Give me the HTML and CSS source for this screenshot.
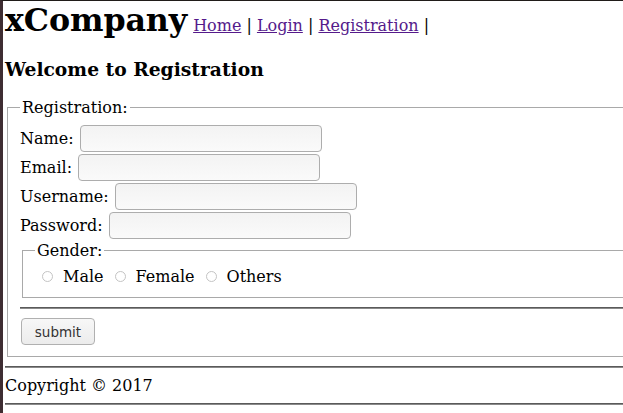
FILE: index.html
```html
<!DOCTYPE html>
<html>
<head>
<meta charset="utf-8">
<link rel="stylesheet" href="styles.css">
</head>
<body>
<div class="page">
  <header class="top">
    <h1 class="brand">xCompany</h1>
    <nav class="nav"><a href="#">Home</a> | <a href="#">Login</a> | <a href="#">Registration</a> |</nav>
  </header>
  <h3 class="welcome">Welcome to Registration</h3>
  <form class="form">
    <fieldset class="box">
      <legend class="legend">Registration:</legend>
      <div class="row"><label>Name:</label><input class="field" type="text"></div>
      <div class="row"><label>Email:</label><input class="field" type="text"></div>
      <div class="row"><label>Username:</label><input class="field" type="text"></div>
      <div class="row"><label>Password:</label><input class="field" type="password"></div>
      <fieldset class="box gender">
        <legend class="legend">Gender:</legend>
        <div class="radios">
          <span class="opt"><input class="radio" type="radio" name="g"><span>Male</span></span>
          <span class="opt"><input class="radio" type="radio" name="g"><span>Female</span></span>
          <span class="opt"><input class="radio" type="radio" name="g"><span>Others</span></span>
        </div>
      </fieldset>
      <hr class="rule">
      <button class="submit" type="button">submit</button>
    </fieldset>
  </form>
  <hr class="rule full">
  <footer class="foot">Copyright © 2017</footer>
  <hr class="rule last">
</div>
</body>
</html>
```
FILE: styles.css
```css
html, body {
  margin: 0;
  padding: 0;
  overflow: hidden;
  background: #fff;
}
body {
  border-top: 1px solid #201c19;
  border-left: 3px solid #3e2d32;
  height: 412px;
  font-family: "DejaVu Serif", serif;
  font-size: 16px;
  color: #000;
}
.page {
  width: 700px;
  padding-left: 2px;
}
.top {
  display: flex;
  align-items: baseline;
  gap: 6px;
}
.brand {
  margin: 0;
  font-size: 31.7px;
  font-weight: bold;
  letter-spacing: -0.1px;
}
.nav a {
  color: #551a8b;
}
.welcome {
  font-size: 18.72px;
  margin: 20px 0 18px;
}
.form {
  margin: 0;
}
.box {
  margin: 0 2px;
  border: 1px solid #a9a9a9;
  padding: 7px 12px 11px;
}
.legend {
  padding: 0 2px;
}
.row {
  display: flex;
  align-items: center;
  gap: 6px;
  height: 29px;
}
.field {
  box-sizing: border-box;
  width: 242px;
  height: 27px;
  border: 1px solid #adadad;
  border-radius: 4px;
  background: linear-gradient(#f3f3f3, #fafafa);
  margin: 0;
}
.gender {
  margin: 1px 2px 0;
  padding: 3px 12px 7px 12px;
}
.radios {
  display: flex;
  align-items: center;
  gap: 11px;
  height: 27px;
  padding-left: 7px;
}
.opt {
  display: flex;
  align-items: center;
  gap: 10px;
}
.radio {
  appearance: none;
  -webkit-appearance: none;
  margin: 0;
  width: 11px;
  height: 11px;
  border: 1px solid #c4c4c4;
  border-radius: 50%;
  background: #fff;
  box-sizing: border-box;
}
.rule {
  border: 0;
  border-top: 1px solid #5a5a5a;
  border-bottom: 1px solid #8a8a8a;
  margin: 9px 0 9px;
}
.submit {
  box-sizing: border-box;
  width: 74px;
  height: 27px;
  margin-left: 1px;
  border: 1px solid #b0b0b0;
  border-radius: 4px;
  background: linear-gradient(#f7f7f7, #ececec);
  font-family: "DejaVu Sans", sans-serif;
  font-size: 13.5px;
  color: #333;
  padding: 0;
}
.full {
  margin: 9px 0 0;
}
.last {
  margin: 0;
}
.foot {
  height: 35px;
  line-height: 35px;
}
```
